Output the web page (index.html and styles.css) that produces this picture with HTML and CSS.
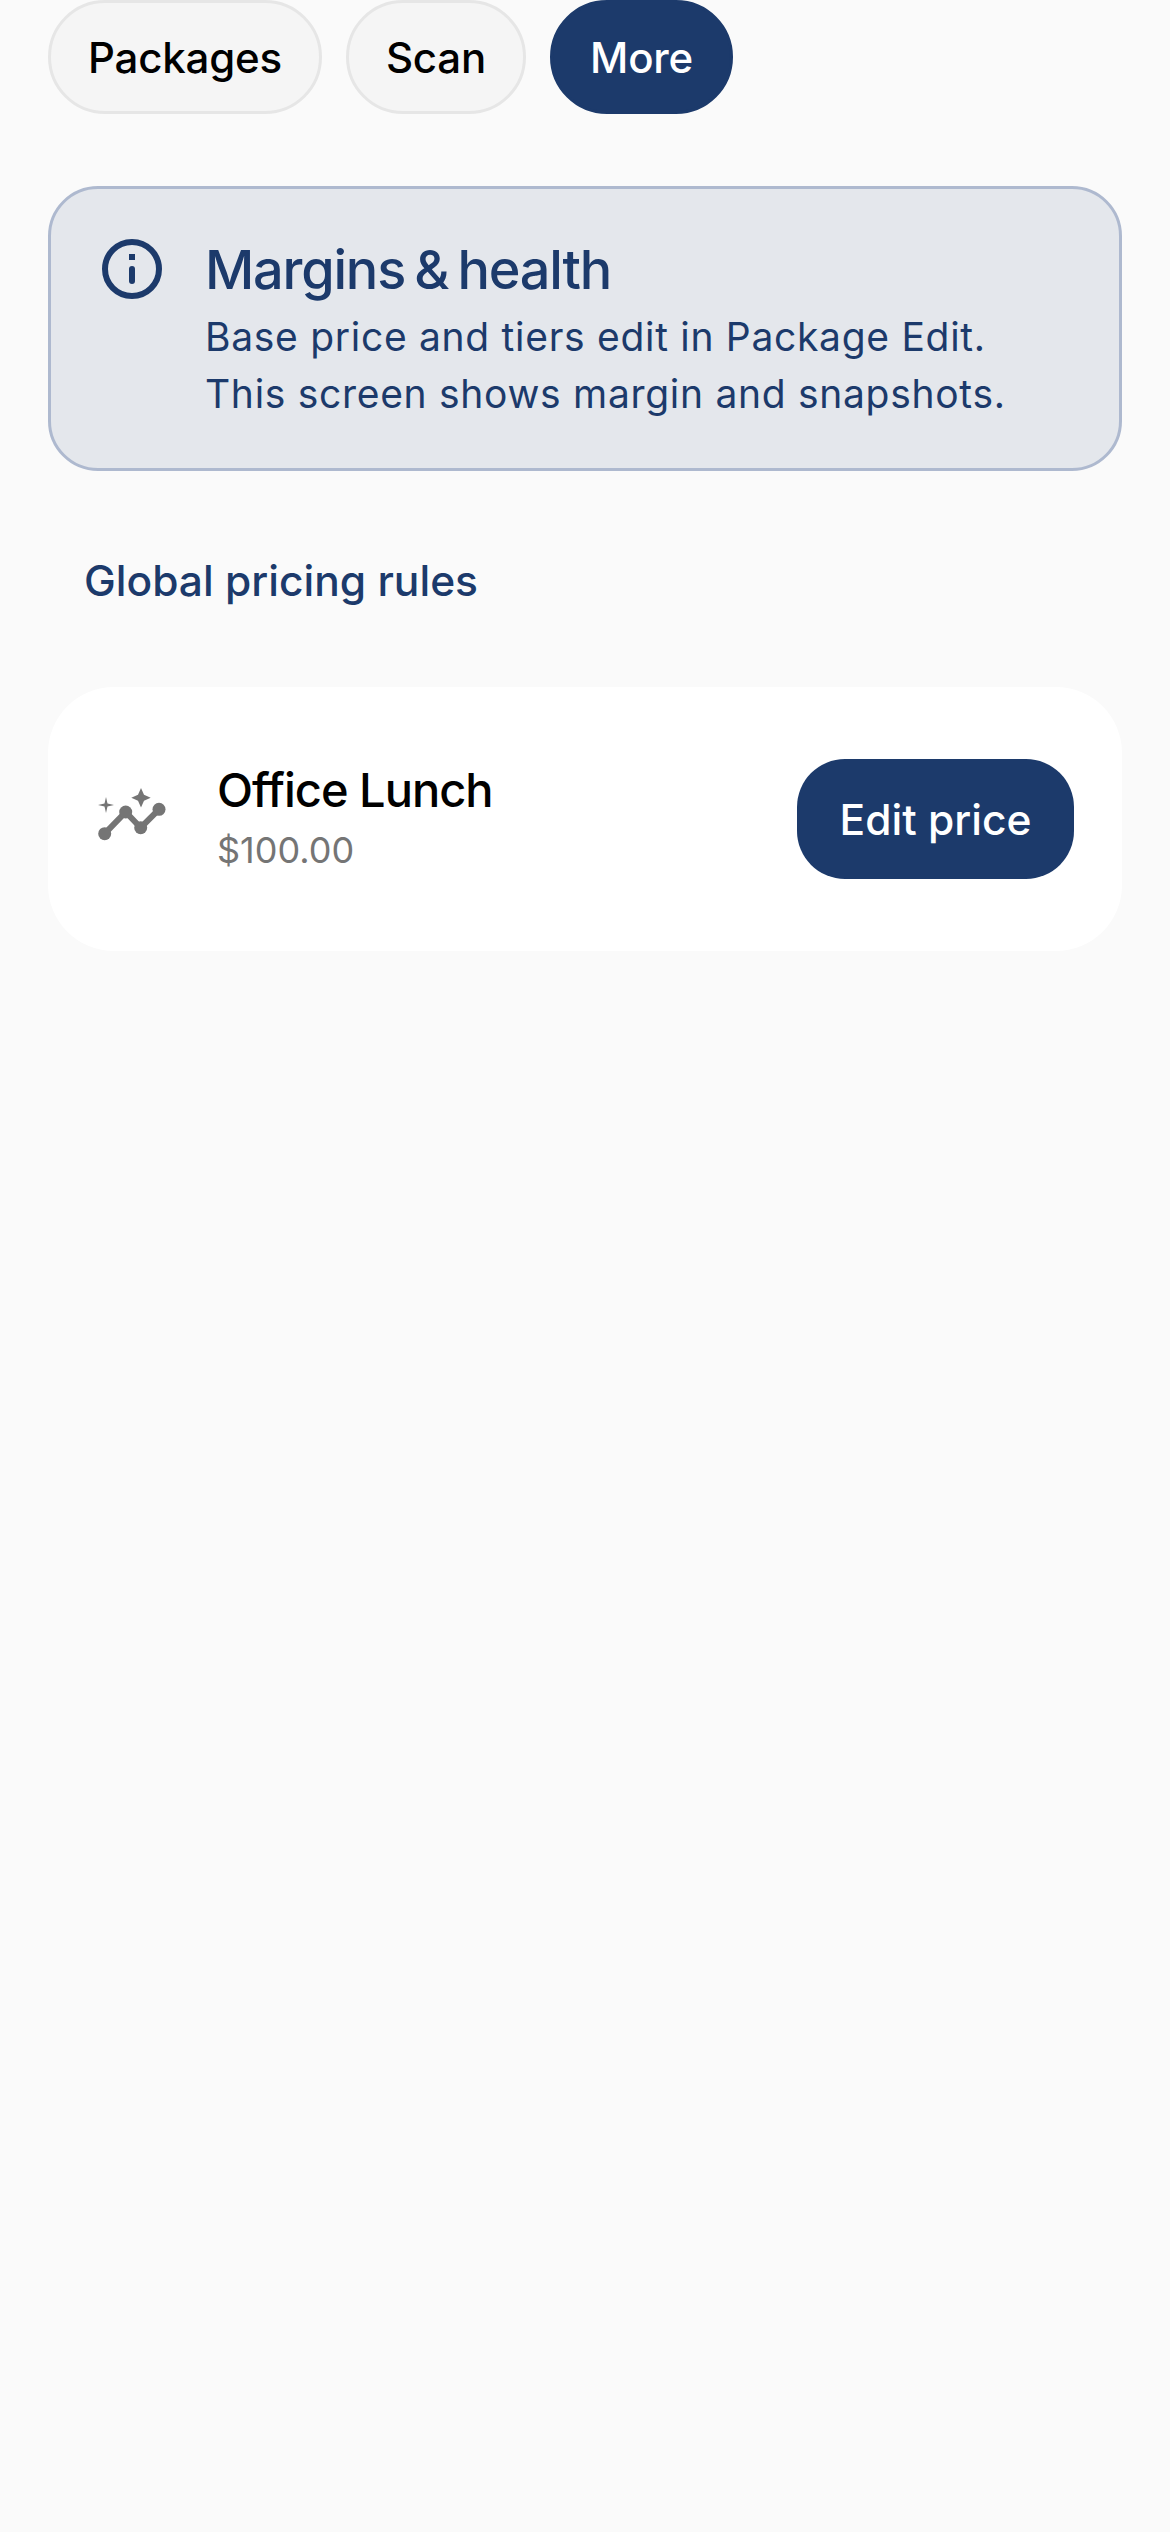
FILE: index.html
```html
<!DOCTYPE html>
<html>
<head>
    <title>Margins &amp; health</title>
    <link rel="stylesheet" href="styles.css">
</head>
<body>
    <nav class="tabs">
        <a class="tab">Packages</a>
        <a class="tab">Scan</a>
        <a class="tab tab-active">More</a>
    </nav>

    <section class="notice">
        <svg class="notice-icon" viewBox="0 0 24 24" fill="none" stroke="#1c3a6b" stroke-width="2">
            <circle cx="12" cy="12" r="9"/>
            <rect x="11" y="7" width="2" height="2" fill="#1c3a6b" stroke="none"/>
            <path d="M12 12v4" stroke-linecap="round"/>
        </svg>
        <div class="notice-text">
            <h2 class="notice-title">Margins &amp; health</h2>
            <p class="notice-line">Base price and tiers edit in Package Edit.</p>
            <p class="notice-line">This screen shows margin and snapshots.</p>
        </div>
    </section>

    <a class="rules-link">Global pricing rules</a>

    <div class="package-card">
        <svg class="package-icon" viewBox="0 0 84 84" fill="#757575">
            <path d="M57 11l3 6.700 6.700 3-6.700 3-3 6.700-3-6.700-6.700-3 6.700-3z"/>
            <path d="M22 20l1.500 6.500 6.500 1.500-6.500 1.500-1.500 6.500-1.500-6.500-6.500-1.500 6.500-1.500z"/>
            <path d="M20.700 56.700L41.700 35 56.700 50.700 75 32.300" fill="none" stroke="#757575" stroke-width="6"/>
            <circle cx="20.700" cy="56.700" r="6.500"/>
            <circle cx="41.700" cy="35" r="6.500"/>
            <circle cx="56.700" cy="50.700" r="6.500"/>
            <circle cx="75" cy="32.300" r="6.500"/>
        </svg>
        <div class="package-info">
            <div class="package-name">Office Lunch</div>
            <div class="package-price">$100.00</div>
        </div>
        <button class="edit-btn">Edit price</button>
    </div>
</body>
</html>
```

FILE: styles.css
```css
body {
    font-family: Inter, "Liberation Sans", sans-serif;
    background-color: #fafafa;
    margin: 0;
    padding: 0 48px;
}

.tabs {
    display: flex;
    gap: 24px;
}

.tab {
    height: 114px;
    box-sizing: border-box;
    padding: 0 37px;
    display: flex;
    align-items: center;
    font-size: 42px;
    font-weight: 500;
    letter-spacing: -0.2px;
    color: #000;
    background-color: #f5f5f5;
    border: 3px solid #e6e6e6;
    border-radius: 57px;
}

.tab-active {
    color: #fff;
    background-color: #1c3a6b;
    border-color: #1c3a6b;
}

.notice {
    margin-top: 72px;
    height: 285px;
    box-sizing: border-box;
    padding: 44px 36px 0 45px;
    display: flex;
    gap: 37px;
    background-color: #e4e7ec;
    border: 3px solid #aeb9cf;
    border-radius: 50px;
    color: #1c3a6b;
}

.notice-icon {
    width: 72px;
    height: 72px;
    flex-shrink: 0;
}

.notice-title {
    margin: 0 0 1px;
    font-size: 54px;
    line-height: 74px;
    font-weight: 500;
    letter-spacing: -1.2px;
    word-spacing: -4px;
}

.notice-line {
    margin: 0;
    font-size: 39px;
    line-height: 57px;
    letter-spacing: 0.7px;
}

.rules-link {
    display: block;
    margin: 82px 0 0 36px;
    font-size: 42.5px;
    line-height: 56px;
    font-weight: 500;
    color: #1c3a6b;
}

.package-card {
    margin-top: 78px;
    height: 264px;
    box-sizing: border-box;
    padding: 0 48px 0 36px;
    display: flex;
    align-items: center;
    background-color: #fff;
    border-radius: 66px;
}

.package-icon {
    width: 84px;
    height: 84px;
    flex-shrink: 0;
}

.package-info {
    flex: 1;
    margin-left: 49px;
    padding-bottom: 6px;
}

.package-name {
    margin-bottom: 5px;
    font-size: 47px;
    line-height: 62px;
    font-weight: 500;
    letter-spacing: -1px;
    color: #000;
}

.package-price {
    font-size: 36px;
    line-height: 48px;
    color: #757575;
}

.edit-btn {
    width: 277px;
    height: 120px;
    padding: 0;
    font-family: inherit;
    font-size: 42.5px;
    font-weight: 500;
    color: #fff;
    background-color: #1c3a6b;
    border: none;
    border-radius: 48px;
}
```
